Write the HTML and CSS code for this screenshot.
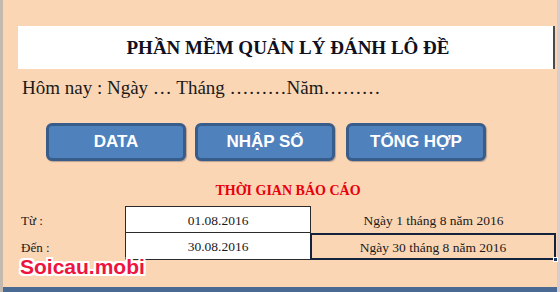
FILE: index.html
```
<!DOCTYPE html>
<html lang="vi">
<head>
<meta charset="utf-8">
<link rel="stylesheet" href="styles.css">
</head>
<body>
<div class="screen">
  <div class="sheet">
    <div class="title-box"><h1 class="title">PHẦN MỀM QUẢN LÝ ĐÁNH LÔ ĐỀ</h1></div>
    <p class="today">Hôm nay : Ngày … Tháng ………Năm………</p>
    <div class="buttons">
      <div class="btn btn-data">DATA</div>
      <div class="btn btn-nhap">NHẬP SỐ</div>
      <div class="btn btn-tong">TỔNG HỢP</div>
    </div>
    <div class="report-title">THỜI GIAN BÁO CÁO</div>
    <div class="table">
      <div class="label">Từ :</div>
      <div class="date top">01.08.2016</div>
      <div class="text">Ngày 1 tháng 8 năm 2016</div>
      <div class="label">Đến :</div>
      <div class="date bottom">30.08.2016</div>
      <div class="text selected">Ngày 30 tháng 8 năm 2016<span class="handle"></span></div>
    </div>
  </div>
  <div class="bottom-bar"></div>
  <div class="watermark">Soicau.mobi</div>
</div>
</body>
</html>
```
FILE: styles.css
```
* { box-sizing: border-box; }
html, body { margin: 0; padding: 0; }
body { width: 560px; height: 292px; overflow: hidden; background: #fbd5b5; }
.screen {
  position: relative;
  width: 560px;
  height: 292px;
  display: flex;
  flex-direction: column;
  border-left: 3px solid #c4b9ad;
  border-right: 3px solid #d7cdd0;
  background: #fbd6b5;
}
.sheet {
  flex: 1;
  padding: 26px 0 0 15px;
  font-family: "Liberation Serif", "Times New Roman", serif;
  color: #1a1a1a;
}
.title-box {
  width: 537px;
  height: 43px;
  background: #ffffff;
  border-right: 2px solid #4a4a4a;
  display: flex;
  align-items: center;
  justify-content: center;
}
.title {
  margin: 0 0 0 5px;
  font-size: 19px;
  font-weight: bold;
  color: #101020;
}
.today {
  margin: 7px 0 0 4px;
  font-size: 19px;
  line-height: 24px;
  color: #1a1a1a;
}
.buttons {
  display: flex;
  gap: 9px;
  margin: 23px 0 0 28px;
}
.btn {
  width: 140px;
  height: 38px;
  background: #4f81bd;
  border: 3px solid #385d8a;
  border-radius: 6px;
  box-shadow: 1px 1px 1px rgba(60, 60, 80, 0.35);
  color: #ffffff;
  font-family: "Liberation Sans", Arial, sans-serif;
  font-weight: bold;
  font-size: 17px;
  display: flex;
  align-items: center;
  justify-content: center;
}
.btn-tong { margin-left: 2px; }
.report-title {
  margin: 22px 0 0 0;
  width: 540px;
  text-align: center;
  color: #e8000a;
  font-weight: bold;
  font-size: 14px;
  line-height: 16px;
}
.table {
  display: grid;
  grid-template-columns: 105px 186px 245px;
  grid-template-rows: 27px 27px;
  margin: 7px 0 0 2px;
  font-size: 13.5px;
}
.label {
  display: flex;
  align-items: center;
  padding-top: 3px;
  padding-left: 1px;
  font-size: 13px;
}
.date {
  background: #ffffff;
  border: 1px solid #2b2b2b;
  display: flex;
  align-items: center;
  justify-content: center;
  padding-top: 2px;
}
.date.bottom { border-top: none; }
.text {
  display: flex;
  align-items: center;
  justify-content: center;
  padding-top: 2px;
  position: relative;
}
.selected {
  border: 2px solid #13233d;
  margin-left: -1px;
}
.handle {
  position: absolute;
  right: -4px;
  bottom: -4px;
  width: 5px;
  height: 5px;
  background: #1d3a66;
  border: 1px solid #ffffff;
}
.bottom-bar {
  height: 5px;
  background: #4a6a93;
}
.watermark {
  position: absolute;
  left: 17px;
  top: 255px;
  font-family: "Liberation Sans", Arial, sans-serif;
  font-weight: bold;
  font-size: 21px;
  line-height: 24px;
  color: #ee1440;
  text-shadow: 1px 1px 0 #fff, -1px -1px 0 #fff, 1px -1px 0 #fff, -1px 1px 0 #fff, 2px 0 0 #fff, -2px 0 0 #fff, 0 2px 0 #fff, 0 -2px 0 #fff, 2px 2px 0 #fff, -2px 2px 0 #fff, 2px -2px 0 #fff, -2px -2px 0 #fff;
}
```
